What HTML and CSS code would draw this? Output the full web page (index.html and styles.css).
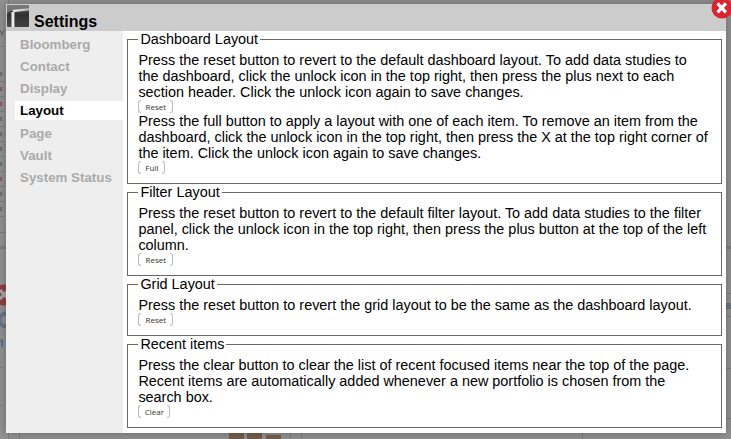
FILE: index.html
```html
<!DOCTYPE html>
<html lang="en">
<head>
<meta charset="utf-8">
<title>Settings</title>
<link rel="stylesheet" href="styles.css">
</head>
<body>
<svg class="backdrop" width="731" height="439" viewBox="0 0 731 439" aria-hidden="true">
  <rect width="731" height="439" fill="#929292"/>
  <g stroke="#7d7d7d" stroke-width="1">
    <path d="M0 46.500H4M0 81.500H4M0 96.500H4M0 111.500H4M0 126.500H4M0 141.500H4M0 156.500H4M0 171.500H4M0 186.500H4M0 201.500H4M0 216.500H4M0 232.500H6M0 367.500H3M0 405.500H3M726 293.500H731M726 316.500H731M726 368.500H731M726 418.500H731"/>
    <path d="M8.500 0V4M8.500 433V439M19.500 433V439M290.500 433V439M301.500 433V439M582.500 433V439"/>
  </g>
  <path d="M0 247.500H6M726 247.500H731" stroke="#7f7f7f" stroke-width="3"/>
  <g fill="none" stroke-width="1.200">
    <path d="M0 30l2 5 2-5" stroke="#5d6874"/>
    <path d="M0 72l2 4M2 72l-2 4M0 117l2 4M2 117l-2 4M0 132l2 4M2 132l-2 4M0 147l2 4M2 147l-2 4M0 162l2 4M2 162l-2 4M0 192l2 4M2 192l-2 4M0 207l2 4M2 207l-2 4" stroke="#5c7860"/>
    <path d="M0 87l2 4M2 87l-2 4M0 102l2 4M2 102l-2 4M0 177l2 4M2 177l-2 4" stroke="#8d5860"/>
  </g>
  <circle cx="4" cy="295" r="10.500" fill="#914047"/>
  <path d="M0 290l8 9M8 290l-8 9" stroke="#aaa" stroke-width="3"/>
  <circle cx="6" cy="320" r="6.500" fill="none" stroke="#66768a" stroke-width="4"/>
  <path d="M0 340.500H2V347" fill="none" stroke="#56758a" stroke-width="2"/>
  <g fill="#775f4b"><path d="M229 433h15v6h-15zM247 433h15v6h-15zM266 435h15v4h-15z"/></g>
  <text class="peek" x="725" y="309">a</text>
</svg>
<main class="dialog">
  <header class="titlebar">
    <svg class="logo" width="22" height="22" viewBox="0 0 22 22" aria-hidden="true">
      <defs>
        <linearGradient id="face" x2="0" y2="1"><stop stop-color="#6c6c6c"/><stop offset=".45" stop-color="#333"/><stop offset="1" stop-color="#4c4c4c"/></linearGradient>
        <linearGradient id="beam"><stop stop-color="#fff"/><stop offset="1" stop-color="#aaa"/></linearGradient>
      </defs>
      <rect width="22" height="22" rx="1" fill="url(#face)"/>
      <path d="M0 0H22V3L5 5 0 8z" fill="#777"/>
      <path d="M5 5L22 3V5.500L7 7z" fill="url(#beam)"/>
      <path d="M4.500 7H7.500V22H4.500z" fill="#eee"/>
      <path d="M7.500 8L22 7V22H7.500z" fill="#303030" opacity=".4"/>
    </svg>
    <h1>Settings</h1>
  </header>
  <div class="body">
    <nav class="tabs">
      <a>Bloomberg</a>
      <a>Contact</a>
      <a>Display</a>
      <a class="active">Layout</a>
      <a>Page</a>
      <a>Vault</a>
      <a>System Status</a>
    </nav>
    <div class="panel">
      <fieldset>
        <legend>Dashboard Layout</legend>
        <p>Press the reset button to revert to the default dashboard layout. To add data studies to<br>the dashboard, click the unlock icon in the top right, then press the plus next to each<br>section header. Click the unlock icon again to save changes.</p>
        <button class="reset">Reset</button>
        <p>Press the full button to apply a layout with one of each item. To remove an item from the<br>dashboard, click the unlock icon in the top right, then press the X at the top right corner of<br>the item. Click the unlock icon again to save changes.</p>
        <button class="full">Full</button>
      </fieldset>
      <fieldset>
        <legend>Filter Layout</legend>
        <p>Press the reset button to revert to the default filter layout. To add data studies to the filter<br>panel, click the unlock icon in the top right, then press the plus button at the top of the left<br>column.</p>
        <button class="reset">Reset</button>
      </fieldset>
      <fieldset>
        <legend>Grid Layout</legend>
        <p>Press the reset button to revert the grid layout to be the same as the dashboard layout.</p>
        <button class="reset">Reset</button>
      </fieldset>
      <fieldset>
        <legend>Recent items</legend>
        <p>Press the clear button to clear the list of recent focused items near the top of the page.<br>Recent items are automatically added whenever a new portfolio is chosen from the<br>search box.</p>
        <button class="clear">Clear</button>
      </fieldset>
    </div>
  </div>
  <svg class="close" width="22" height="22" viewBox="0 0 22 22" role="img" aria-label="Close">
    <circle cx="11" cy="11" r="10.500" fill="#d9232e"/>
    <path d="M6.500 6.300L14.900 15.300M14.900 6.300L6.500 15.300" stroke="#fff" stroke-width="3.200"/>
  </svg>
</main>
</body>
</html>
```
FILE: styles.css
```css
body {
  margin: 0;
  width: 731px;
  height: 439px;
  overflow: hidden;
  position: relative;
  font-family: "Liberation Sans", Arial, sans-serif;
  background: #929292;
}
.backdrop { position: absolute; left: 0; top: 0; }
.peek { font: bold 11px "Liberation Sans", sans-serif; fill: #666; }
.dialog {
  position: relative;
  display: flex;
  flex-direction: column;
  box-sizing: border-box;
  width: 720px;
  height: 429px;
  margin: 4px 5px 6px 6px;
  background: #fff;
  box-shadow: 0 0 10px rgba(0, 0, 0, .3);
}
.titlebar {
  display: flex;
  height: 27px;
  flex: none;
  padding-left: 1px;
  background: #ccc;
}
.logo { margin-top: 1px; }
h1 {
  margin: 9px 0 0 5px;
  font-size: 16px;
  line-height: 18px;
}
.body { display: flex; flex: 1; }
.tabs {
  display: flex;
  flex-direction: column;
  gap: 3px;
  box-sizing: border-box;
  width: 117px;
  padding: 4px 0 0 9px;
  background: #eee;
}
.tabs a {
  padding-left: 5px;
  font-size: 13.33px;
  font-weight: bold;
  line-height: 19px;
  color: #aaa;
}
.tabs .active { margin-bottom: 1px; background: #fff; color: #000; }
.panel { flex: 1; padding: 0 4px; }
fieldset {
  margin: 0;
  padding: 5px 0 9px 10.4px;
  border: 1px solid #696969;
  font-size: 14.42px;
  line-height: 16px;
}
legend { height: 16px; padding: 0 2px; }
p { margin: 0; white-space: nowrap; }
button {
  position: relative;
  display: block;
  height: 13px;
  box-sizing: border-box;
  padding: 0;
  border: 0;
  background: #fff;
  color: #333;
  font: 8px/13px "Open Sans", sans-serif;
}
button::before,
button::after {
  content: "";
  position: absolute;
  top: 0;
  box-sizing: border-box;
  width: 3px;
  height: 13px;
  border: 1px solid #bbb;
}
button::before { left: 0; border-right: 0; border-radius: 3px 0 0 3px; }
button::after { right: 0; border-left: 0; border-radius: 0 3px 3px 0; }
.reset { width: 35px; }
.full { width: 27px; }
.clear { width: 32px; }
.close { position: absolute; left: 705px; top: -7px; }
```
